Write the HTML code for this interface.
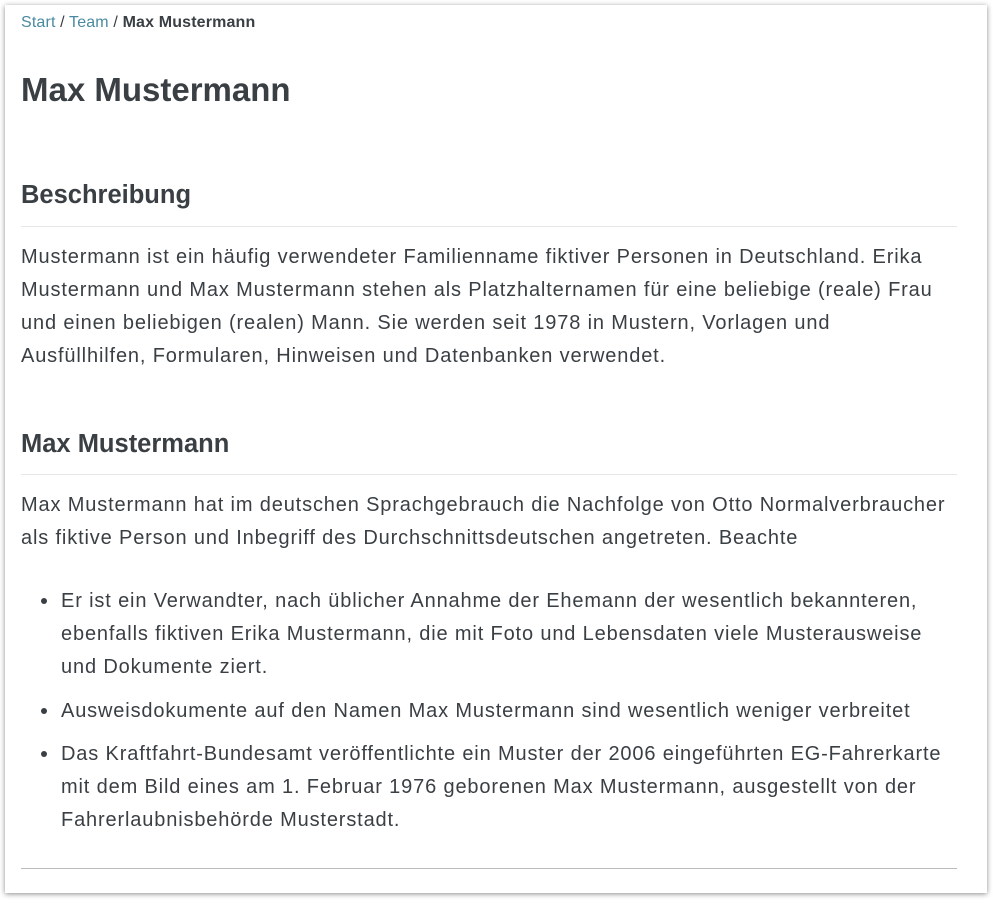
<!DOCTYPE html>
<html><head><meta charset="utf-8"><style>
body{margin:0;background:#fff;font-family:"Liberation Sans",sans-serif;color:#3a3f44;}
.card{position:absolute;left:5px;top:5px;width:982px;height:888px;background:#fff;box-shadow:0 1px 5px rgba(0,0,0,.45);}
.ab{position:absolute;left:16px;white-space:nowrap;}
.bc{top:9px;font-size:16px;line-height:18px;letter-spacing:0.15px}
.bc a{color:#4a8aa0;text-decoration:none}
.bc b{color:#3a3f44}
h1{margin:0;font-size:33px;font-weight:bold;line-height:40px;top:65px}
h2{margin:0;font-size:25.5px;font-weight:bold;line-height:32px}
.hr{position:absolute;left:16px;width:936px;height:1px;background:#e8e8e8}
.p{font-size:20px;line-height:33px;letter-spacing:0.85px}
.li{position:absolute;left:56px;font-size:20px;line-height:33px;white-space:nowrap;letter-spacing:0.85px}
.dot{position:absolute;left:36px;width:6px;height:6px;border-radius:50%;background:#3a3f44}
</style></head><body><div class="card">
<div class="ab bc"><a>Start</a> / <a>Team</a> / <b>Max Mustermann</b></div>
<h1 class="ab">Max Mustermann</h1>
<h2 class="ab" style="top:174px">Beschreibung</h2>
<div class="hr" style="top:221px"></div>
<div class="ab p" style="top:236px">Mustermann ist ein häufig verwendeter Familienname fiktiver Personen in Deutschland. Erika<br>Mustermann und Max Mustermann stehen als Platzhalternamen für eine beliebige (reale) Frau<br>und einen beliebigen (realen) Mann. Sie werden seit 1978 in Mustern, Vorlagen und<br>Ausfüllhilfen, Formularen, Hinweisen und Datenbanken verwendet.</div>
<h2 class="ab" style="top:423px">Max Mustermann</h2>
<div class="hr" style="top:469px"></div>
<div class="ab p" style="top:484px">Max Mustermann hat im deutschen Sprachgebrauch die Nachfolge von Otto Normalverbraucher<br>als fiktive Person und Inbegriff des Durchschnittsdeutschen angetreten. Beachte</div>
<div class="dot" style="top:593px"></div>
<div class="li" style="top:580px">Er ist ein Verwandter, nach üblicher Annahme der Ehemann der wesentlich bekannteren,<br>ebenfalls fiktiven Erika Mustermann, die mit Foto und Lebensdaten viele Musterausweise<br>und Dokumente ziert.</div>
<div class="dot" style="top:703px"></div>
<div class="li" style="top:690px">Ausweisdokumente auf den Namen Max Mustermann sind wesentlich weniger verbreitet</div>
<div class="dot" style="top:746px"></div>
<div class="li" style="top:733px">Das Kraftfahrt-Bundesamt veröffentlichte ein Muster der 2006 eingeführten EG-Fahrerkarte<br>mit dem Bild eines am 1. Februar 1976 geborenen Max Mustermann, ausgestellt von der<br>Fahrerlaubnisbehörde Musterstadt.</div>
<div class="hr" style="top:863px;background:#bbb"></div>
</div></body></html>
